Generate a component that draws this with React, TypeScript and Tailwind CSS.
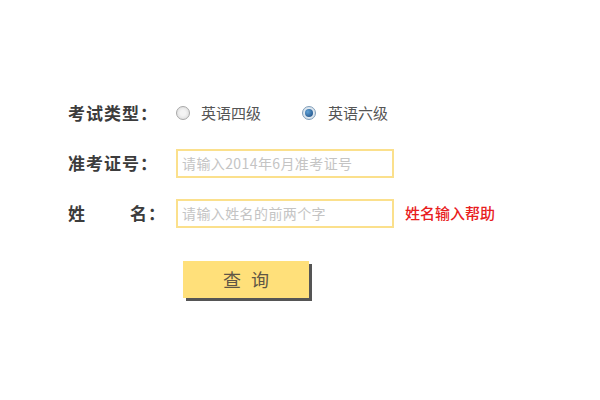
const cjk = "font-['Noto_Sans_CJK_SC','Liberation_Sans',sans-serif]";

function Radio({ checked }: { checked?: boolean }) {
  if (checked) {
    return (
      <span className="flex h-[14px] w-[14px] items-center justify-center rounded-full border border-[#7f9db9] bg-[radial-gradient(circle,#e6eef5_40%,#c9d6e2_100%)]">
        <span className="h-[8px] w-[8px] rounded-full bg-[radial-gradient(circle_at_35%_35%,#5fa2d8,#17457a)]" />
      </span>
    );
  }
  return (
    <span className="block h-[14px] w-[14px] rounded-full border border-[#a8a8a8] bg-[radial-gradient(circle,#f4f4f4_30%,#d6d6d6_100%)]" />
  );
}

const labelClass = "w-[108px] shrink-0 text-[17px] font-bold tracking-[1px] text-[#3c3c3c]";
const inputClass =
  "h-[29px] w-[218px] border-2 border-[#fbe08c] bg-white px-[4px] text-[14px] tracking-[0.4px] text-[#333] placeholder:text-[#c4c4c4] outline-none";

export default function App() {
  return (
    <div className={`h-[400px] w-[600px] bg-white pt-[88px] pl-[68px] ${cjk}`}>
      <div className="flex h-[50px] items-center">
        <span className={labelClass}>考试类型：</span>
        <label className="flex items-center">
          <Radio />
          <span className="ml-[11px] text-[15px] text-[#555]">英语四级</span>
        </label>
        <label className="ml-[41px] flex items-center">
          <Radio checked />
          <span className="ml-[12px] text-[15px] text-[#555]">英语六级</span>
        </label>
      </div>

      <div className="flex h-[50px] items-center">
        <span className={labelClass}>准考证号：</span>
        <input className={inputClass} placeholder="请输入2014年6月准考证号" />
      </div>

      <div className="flex h-[50px] items-center">
        <span className={`${labelClass} flex`}>
          <span>姓</span>
          <span className="ml-[44px]">名：</span>
        </span>
        <input className={inputClass} placeholder="请输入姓名的前两个字" />
        <a className="ml-[11px] text-[15px] font-medium text-[#e8201e]">姓名输入帮助</a>
      </div>

      <div className="mt-[23px] pl-[115px]">
        <button className="h-[37px] w-[126px] bg-[#ffe07a] pl-[10px] text-[18px] tracking-[10px] text-[#5f5646] shadow-[3px_3px_0_#555]">
          查询
        </button>
      </div>
    </div>
  );
}
